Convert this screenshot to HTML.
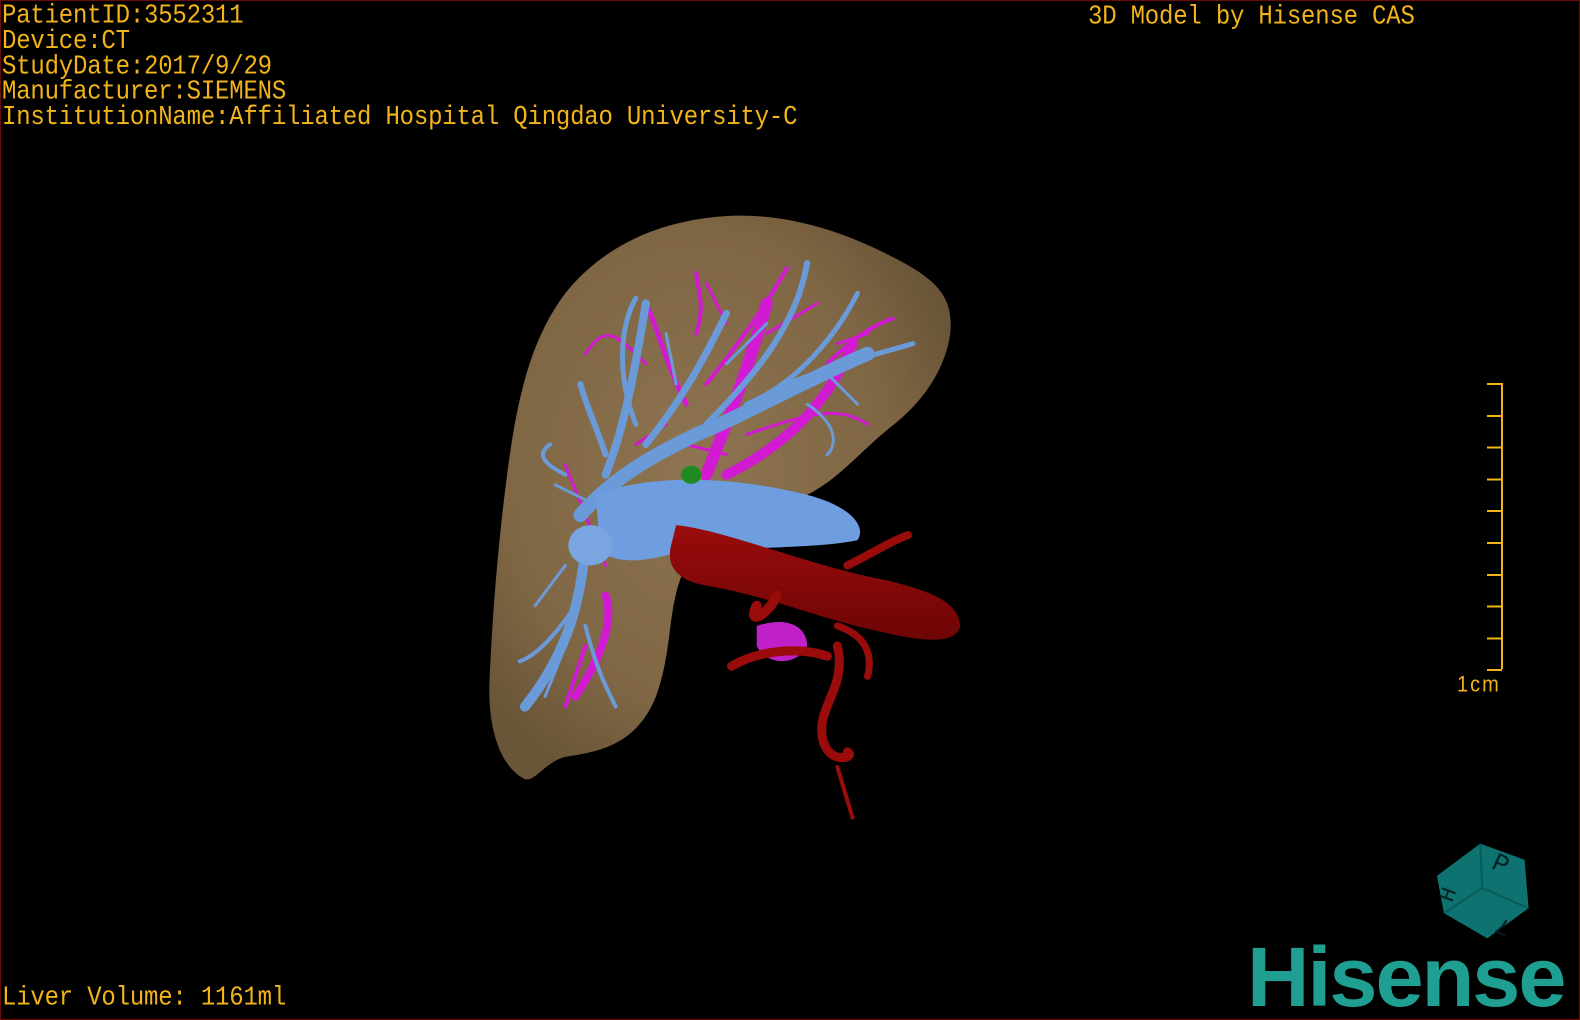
<!DOCTYPE html>
<html><head><meta charset="utf-8"><style>
html,body{margin:0;padding:0;background:#000;}
#f{position:relative;width:1580px;height:1020px;background:#000;overflow:hidden;box-sizing:border-box;border:1px solid #6a0a0a;}
.t{position:absolute;color:#f2b418;font-family:"Liberation Mono",monospace;font-size:24px;line-height:23px;white-space:pre;letter-spacing:-0.2px;transform:scaleY(1.1);transform-origin:0 0;}
svg{position:absolute;left:0;top:0;}
</style></head><body><div id="f">
<svg width="1580" height="1020" viewBox="0 0 1568 1012" preserveAspectRatio="none">
<defs>
<radialGradient id="lv" cx="0.45" cy="0.45" r="0.6"><stop offset="0" stop-color="#8e7450"/><stop offset="0.7" stop-color="#7f6644"/><stop offset="1" stop-color="#6a5538"/></radialGradient>
<linearGradient id="rd" x1="0" y1="0" x2="0" y2="1"><stop offset="0" stop-color="#9a0c0c"/><stop offset="1" stop-color="#6e0505"/></linearGradient>
</defs>
<path d="M520,772 C495,760 482,720 485,670 C488,600 495,520 505,450 C515,380 530,330 560,290 C600,240 660,215 730,213 C800,212 860,240 900,262 C935,282 945,300 942,330 C938,360 920,395 880,425 C850,450 830,475 800,490 C760,505 700,520 680,560 C660,600 668,640 650,690 C630,740 590,745 560,750 C540,755 530,775 520,772 Z" fill="url(#lv)"/>
<g fill="none" stroke="#d21ad2" stroke-linecap="round">
<path d="M700,470 C720,420 740,370 760,300" stroke-width="12"/>
<path d="M720,470 C780,440 820,400 845,340" stroke-width="10"/>
<path d="M600,590 C610,620 590,660 570,690" stroke-width="8"/>
<path d="M680,400 C660,360 650,320 640,300" stroke-width="5"/>
<path d="M700,380 C740,330 760,300 780,265" stroke-width="4"/>
<path d="M640,360 C610,330 600,320 580,350" stroke-width="3"/>
<path d="M820,360 C850,330 870,320 885,315" stroke-width="4"/>
<path d="M690,330 C700,300 690,280 690,270" stroke-width="4"/>
<path d="M740,430 C800,410 830,400 860,420" stroke-width="3"/>
<path d="M600,560 L560,460" stroke-width="3"/>
<path d="M580,640 L560,700" stroke-width="4"/>
<path d="M720,320 L700,280 M760,330 L810,300 M830,340 L860,330 M660,420 L630,440 M680,440 L720,450" stroke-width="3"/>
</g>
<path d="M750,620 C780,610 800,620 800,640 C790,660 760,660 750,640 Z" fill="#c020c8"/>
<g fill="none" stroke="#6a9ad8" stroke-linecap="round">
<path d="M575,510 C610,470 650,450 690,430 C740,410 790,380 860,350" stroke-width="14"/>
<path d="M600,470 C620,420 630,360 640,300" stroke-width="8"/>
<path d="M640,440 C680,390 700,350 720,310" stroke-width="7"/>
<path d="M700,420 C750,370 790,320 800,260" stroke-width="6"/>
<path d="M740,400 C790,380 830,330 850,290" stroke-width="5"/>
<path d="M780,380 C830,360 870,350 905,340" stroke-width="5"/>
<path d="M600,450 C590,420 580,400 575,380" stroke-width="6"/>
<path d="M630,420 C610,370 615,320 630,295" stroke-width="5"/>
<path d="M580,540 C575,600 560,650 520,700" stroke-width="10"/>
<path d="M570,600 C550,630 530,650 515,655" stroke-width="4"/>
<path d="M580,620 C590,660 600,680 610,700" stroke-width="4"/>
<path d="M560,470 C540,460 530,450 545,440" stroke-width="4"/>
<path d="M800,400 C830,420 830,440 820,450" stroke-width="3"/>
<path d="M670,380 L660,330 M720,360 L760,320 M820,370 L850,400 M590,500 L550,480 M560,560 L530,600 M560,640 L540,690" stroke-width="3"/>
</g>
<path d="M590,490 C640,470 720,470 800,490 C840,500 860,520 850,535 C800,545 720,540 660,550 C640,555 610,560 595,545 Z" fill="#6f9ee0"/>
<ellipse cx="585" cy="540" rx="22" ry="20" fill="#79a5e0"/>
<ellipse cx="685" cy="470" rx="10" ry="9" fill="#1f8a1f"/>
<path d="M670,520 C720,525 800,560 880,575 C920,585 950,595 952,620 C948,640 910,635 870,625 C820,615 760,590 700,580 C670,575 660,560 665,540 Z" fill="url(#rd)"/>
<g fill="none" stroke="#9a0b0b" stroke-linecap="round">
<path d="M840,560 C870,545 885,535 900,530" stroke-width="8"/>
<path d="M770,590 C760,610 740,620 750,600" stroke-width="10"/>
<path d="M830,640 C840,680 810,700 815,730 C820,760 850,750 840,745" stroke-width="9"/>
<path d="M725,660 C750,645 790,640 820,650" stroke-width="9"/>
<path d="M830,620 C860,630 865,650 860,670" stroke-width="7"/>
<path d="M830,760 L845,810" stroke-width="4"/>
</g>
<path d="M1425,868 L1468,836 L1512,852 L1516,900 L1475,930 L1432,905 Z" fill="#0e7270"/>
<path d="M1468,836 L1470,880 L1432,905 M1470,880 L1516,900" stroke="#0a5a58" stroke-width="2" fill="none"/>
<text x="1478" y="860" font-family="Liberation Mono" font-size="26" fill="#022" transform="rotate(25 1478 860)">P</text>
<text x="1478" y="900" font-family="Liberation Mono" font-size="24" fill="#022" transform="rotate(200 1490 905)">7</text>
<text x="1440" y="895" font-family="Liberation Mono" font-size="22" fill="#022" transform="rotate(-70 1440 895)">H</text>
</svg>
<div class="t" style="left:1px;top:3px">PatientID:3552311
Device:CT
StudyDate:2017/9/29
Manufacturer:SIEMENS
InstitutionName:Affiliated Hospital Qingdao University-C</div>
<div class="t" style="left:1087px;top:4px">3D Model by Hisense CAS</div>
<div class="t" style="left:1px;top:985px">Liver Volume: 1161ml</div>
<div style="position:absolute;left:1500px;top:382px;width:2px;height:286px;background:#f2b418"></div>
<div style="position:absolute;left:1486px;top:382px;width:15px;height:290px;background:repeating-linear-gradient(#f2b418 0 2px,transparent 2px 31.8px)"></div>
<div class="t" style="left:1456px;top:672px;font-family:'Liberation Sans',sans-serif;font-size:20px;letter-spacing:2px">1cm</div>
<div style="position:absolute;left:1246px;top:936px;font-family:'Liberation Sans',sans-serif;font-weight:bold;font-size:84px;line-height:80px;color:#1f9e92;letter-spacing:-2px;transform:scaleX(1.03);transform-origin:0 0">Hisense</div>
</div></body></html>
